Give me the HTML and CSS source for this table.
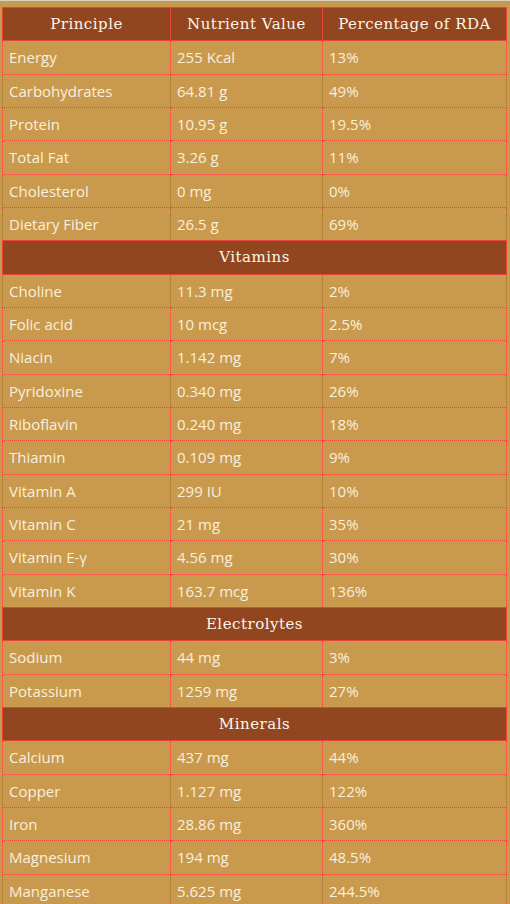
FILE: index.html
```html
<!DOCTYPE html>
<html lang="en">
<head>
    <meta charset="UTF-8">
    <meta name="viewport" content="width=device-width, initial-scale=1.0">
    <title>Nutrition Value</title>
    <link rel="stylesheet" href="styles.css">
</head>
<body>
    <div class="wrap">
        <table class="nutrition">
            <colgroup>
                <col class="col-name">
                <col class="col-value">
                <col class="col-rda">
            </colgroup>
            <tr class="head">
                <th>Principle</th>
                <th>Nutrient Value</th>
                <th>Percentage of RDA</th>
            </tr>
            <tr><td>Energy</td><td>255 Kcal</td><td>13%</td></tr>
            <tr><td>Carbohydrates</td><td>64.81 g</td><td>49%</td></tr>
            <tr><td>Protein</td><td>10.95 g</td><td>19.5%</td></tr>
            <tr><td>Total Fat</td><td>3.26 g</td><td>11%</td></tr>
            <tr><td>Cholesterol</td><td>0 mg</td><td>0%</td></tr>
            <tr><td>Dietary Fiber</td><td>26.5 g</td><td>69%</td></tr>

            <!-- Vitamins -->
            <tr class="head"><th colspan="3">Vitamins</th></tr>
            <tr><td>Choline</td><td>11.3 mg</td><td>2%</td></tr>
            <tr><td>Folic acid</td><td>10 mcg</td><td>2.5%</td></tr>
            <tr><td>Niacin</td><td>1.142 mg</td><td>7%</td></tr>
            <tr><td>Pyridoxine</td><td>0.340 mg</td><td>26%</td></tr>
            <tr><td>Riboflavin</td><td>0.240 mg</td><td>18%</td></tr>
            <tr><td>Thiamin</td><td>0.109 mg</td><td>9%</td></tr>
            <tr><td>Vitamin A</td><td>299 IU</td><td>10%</td></tr>
            <tr><td>Vitamin C</td><td>21 mg</td><td>35%</td></tr>
            <tr><td>Vitamin E-γ</td><td>4.56 mg</td><td>30%</td></tr>
            <tr><td>Vitamin K</td><td>163.7 mcg</td><td>136%</td></tr>

            <!-- Electrolytes -->
            <tr class="head"><th colspan="3">Electrolytes</th></tr>
            <tr><td>Sodium</td><td>44 mg</td><td>3%</td></tr>
            <tr><td>Potassium</td><td>1259 mg</td><td>27%</td></tr>

            <!-- Minerals -->
            <tr class="head"><th colspan="3">Minerals</th></tr>
            <tr><td>Calcium</td><td>437 mg</td><td>44%</td></tr>
            <tr><td>Copper</td><td>1.127 mg</td><td>122%</td></tr>
            <tr><td>Iron</td><td>28.86 mg</td><td>360%</td></tr>
            <tr><td>Magnesium</td><td>194 mg</td><td>48.5%</td></tr>
            <tr><td>Manganese</td><td>5.625 mg</td><td>244.5%</td></tr>
        </table>
    </div>
</body>
</html>
```

FILE: styles.css
```css
body {
    margin: 0;
    background-color: #c99a4e;
    font-family: "Open Sans", "Noto Sans", sans-serif;
}
.wrap {
    padding: 6px 3px 0 2px;
    border-top: 1px solid #d9d2c4;
}
.nutrition {
    width: 100%;
    border-collapse: collapse;
    border: 1px dotted #e8453a;
}
.col-name {
    width: 168px;
}
.col-value {
    width: 152px;
}
.nutrition td {
    height: 33.33px;
    padding: 0 6px;
    border: 1px dotted #e8453a;
    color: #f8efdc;
    font-size: 15px;
    box-sizing: border-box;
}
.nutrition th {
    height: 33.33px;
    padding: 0 6px;
    background-color: #924620;
    border: 1px solid #e8453a;
    color: #fbf5ea;
    font-family: "DejaVu Serif", serif;
    font-size: 15px;
    font-weight: normal;
    letter-spacing: 0.5px;
    text-align: center;
    box-sizing: border-box;
}
```
